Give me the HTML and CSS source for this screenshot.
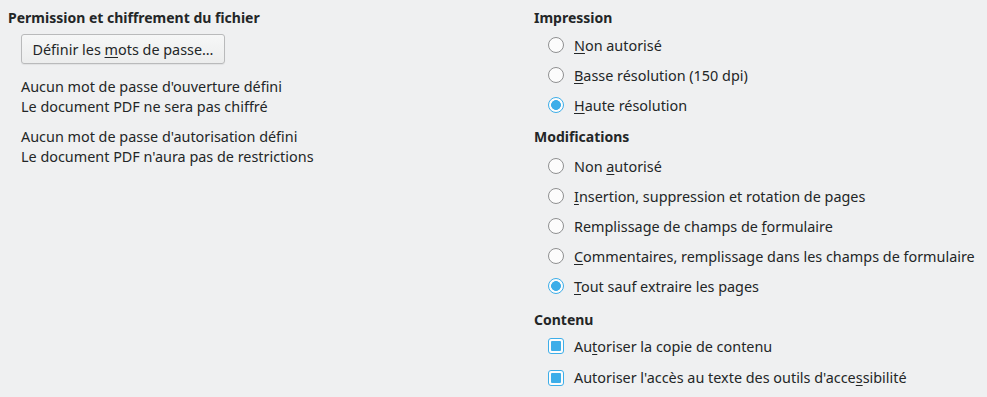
FILE: index.html
```html
<!DOCTYPE html>
<html lang="fr">
<head>
<meta charset="utf-8">
<link rel="stylesheet" href="styles.css">
</head>
<body>
<div class="page">
  <section class="col left">
    <h2 class="hdr">Permission et chiffrement du fichier</h2>
    <button class="btn">Définir les <u>m</u>ots de passe…</button>
    <p class="info">Aucun mot de passe d'ouverture défini<br>Le document PDF ne sera pas chiffré</p>
    <p class="info second">Aucun mot de passe d'autorisation défini<br>Le document PDF n'aura pas de restrictions</p>
  </section>
  <section class="col right">
    <h2 class="hdr">Impression</h2>
    <ul class="opts first">
      <li class="opt"><span class="radio"></span><span><u>N</u>on autorisé</span></li>
      <li class="opt"><span class="radio"></span><span><u>B</u>asse résolution (150 dpi)</span></li>
      <li class="opt"><span class="radio on"></span><span><u>H</u>aute résolution</span></li>
    </ul>
    <h2 class="hdr mod">Modifications</h2>
    <ul class="opts mods">
      <li class="opt"><span class="radio"></span><span>Non <u>a</u>utorisé</span></li>
      <li class="opt"><span class="radio"></span><span><u>I</u>nsertion, suppression et rotation de pages</span></li>
      <li class="opt"><span class="radio"></span><span>Remplissage de champs de <u>f</u>ormulaire</span></li>
      <li class="opt"><span class="radio"></span><span><u>C</u>ommentaires, remplissage dans les champs de formulaire</span></li>
      <li class="opt"><span class="radio on"></span><span><u>T</u>out sauf extraire les pages</span></li>
    </ul>
    <h2 class="hdr cont">Contenu</h2>
    <ul class="opts checks">
      <li class="opt chk-row"><span class="check"></span><span>Au<u>t</u>oriser la copie de contenu</span></li>
      <li class="opt chk-row"><span class="check"></span><span>Autoriser l'accès au texte des outils d'acce<u>s</u>sibilité</span></li>
    </ul>
  </section>
</div>
</body>
</html>
```
FILE: styles.css
```css
html, body {
  margin: 0;
  padding: 0;
  background: #eff0f1;
}
body {
  font-family: "Noto Sans", "DejaVu Sans", sans-serif;
  font-size: 14.4px;
  color: #232627;
}
.page {
  display: grid;
  grid-template-columns: 526px 1fr;
  padding: 8px;
  height: 397px;
  box-sizing: border-box;
}
.col {
  display: flex;
  flex-direction: column;
  align-items: flex-start;
}
.hdr {
  margin: 0;
  font-size: 14px;
  font-weight: bold;
  line-height: 20px;
}
.btn {
  margin: 6px 0 0 13px;
  height: 30px;
  padding: 0 10px;
  font: inherit;
  color: #232627;
  background: linear-gradient(#f6f7f7, #eceded);
  border: 1px solid #b9babb;
  border-radius: 3px;
  box-shadow: 0 1px 1px rgba(0,0,0,0.06);
  width: 204px;
}
.btn u, .opt u { text-decoration-thickness: 1px; text-underline-offset: 2px; }
.info {
  margin: 13px 0 0 13px;
  line-height: 20px;
}
.info.second { margin-top: 10px; }
.opts {
  list-style: none;
  margin: 2px 0 0 14px;
  padding: 0;
}
.opts.mods { margin-top: 4px; }
.hdr.mod { margin-top: 7px; }
.hdr.cont { margin-top: 9px; }
.opts.checks { margin-top: 0; }
.opt {
  display: flex;
  align-items: center;
  gap: 10px;
  height: 30px;
}
.chk-row { height: 32px; }
.chk-row:last-child { height: 31px; }
.radio {
  width: 16px;
  height: 16px;
  box-sizing: border-box;
  border: 1px solid #8f9091;
  border-radius: 50%;
  background: #fcfcfc;
  flex: none;
}
.radio.on {
  border-color: #3daee9;
  background: radial-gradient(circle, #3daee9 0 4.6px, #fcfcfc 5.2px);
}
.check {
  width: 16px;
  height: 16px;
  box-sizing: border-box;
  border: 1px solid #3daee9;
  border-radius: 3px;
  background: #fcfcfc;
  flex: none;
  display: flex;
  align-items: center;
  justify-content: center;
}
.check::after {
  content: "";
  width: 10px;
  height: 10px;
  background: #3daee9;
  border-radius: 1px;
}
```
